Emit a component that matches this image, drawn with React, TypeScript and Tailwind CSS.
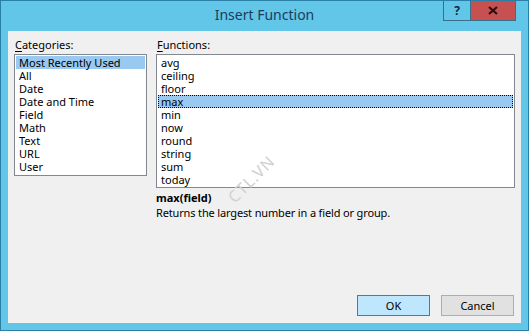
import React from "react";

const categories = ["Most Recently Used", "All", "Date", "Date and Time", "Field", "Math", "Text", "URL", "User"];
const functions = ["avg", "ceiling", "floor", "max", "min", "now", "round", "string", "sum", "today"];

export default function App() {
  return (
    <div
      className="relative w-[529px] h-[331px] bg-[#62c6e9] border border-[#2a7fa6] flex flex-col overflow-hidden"
      style={{ fontFamily: '"Noto Sans", sans-serif' }}
    >
      {/* Title bar */}
      <div className="relative h-[30px] flex items-center justify-center shrink-0">
        <span className="text-[14px] text-[#1b3c5c] leading-none mb-[2px]">Insert Function</span>
        <div className="absolute top-[-1px] right-[12px] flex h-[21px]">
          <div className="w-[27px] h-[21px] border border-[#3a6f8a] border-r-0 bg-[#62c6e9] flex items-center justify-center">
            <span className="text-[12px] font-bold text-[#0e2a44] leading-none">?</span>
          </div>
          <div className="w-[46px] h-[21px] border border-[#3a6f8a] bg-[#c75050] flex items-center justify-center">
            <svg width="10" height="9" viewBox="0 0 10 9">
              <path d="M1 1 L9 8 M9 1 L1 8" stroke="#2a1010" strokeWidth="2.2" />
            </svg>
          </div>
        </div>
      </div>

      {/* Content */}
      <div className="mx-[7px] mb-[7px] flex-1 bg-[#f0f0f0] flex flex-col text-[11px] text-black">
        <div className="flex px-[6px] pt-[6px] gap-[9px]">
          {/* Categories */}
          <div className="flex flex-col w-[133px]">
            <div className="h-[17px] leading-[15px] pl-[1px]">
              <span className="underline underline-offset-2">C</span>ategories:
            </div>
            <div className="h-[122px] bg-white border border-[#828790] pt-[1px] px-[1px]">
              {categories.map((c, i) => (
                <div
                  key={c}
                  className={`h-[13px] leading-[13px] pl-[3px] ${i === 0 ? "bg-[#99c9f1]" : ""}`}
                >
                  {c}
                </div>
              ))}
            </div>
          </div>
          {/* Functions */}
          <div className="flex flex-col flex-1">
            <div className="h-[17px] leading-[15px] pl-[1px]">
              <span className="underline underline-offset-2">F</span>unctions:
            </div>
            <div className="h-[134px] bg-white border border-[#828790] pt-[1px] px-[1px]">
              {functions.map((f, i) => (
                <div
                  key={f}
                  className={`h-[13px] leading-[11px] pl-[2px] ${
                    i === 3 ? "bg-[#99c9f1] border border-dotted border-black" : "border border-transparent"
                  }`}
                >
                  {f}
                </div>
              ))}
            </div>
            <div className="mt-[2px] font-bold leading-[15px]">max(field)</div>
            <div className="leading-[15px] tracking-[-0.15px]">Returns the largest number in a field or group.</div>
          </div>
        </div>
        <div className="flex-1" />
        <div className="flex justify-end gap-[11px] pr-[7px] pb-[7px]">
          <button className="w-[73px] h-[21px] bg-[#bee6fd] border border-[#3c7fb1] text-[11px] leading-none">
            OK
          </button>
          <button className="w-[73px] h-[21px] bg-[#e1e1e1] border border-[#adadad] text-[11px] leading-none">
            Cancel
          </button>
        </div>
      </div>

      {/* Watermark */}
      <div className="absolute left-[221px] top-[166px] -rotate-45 text-[16px] text-[#d0d0d0] pointer-events-none select-none tracking-[1px]">
        CTL.VN
      </div>
    </div>
  );
}
